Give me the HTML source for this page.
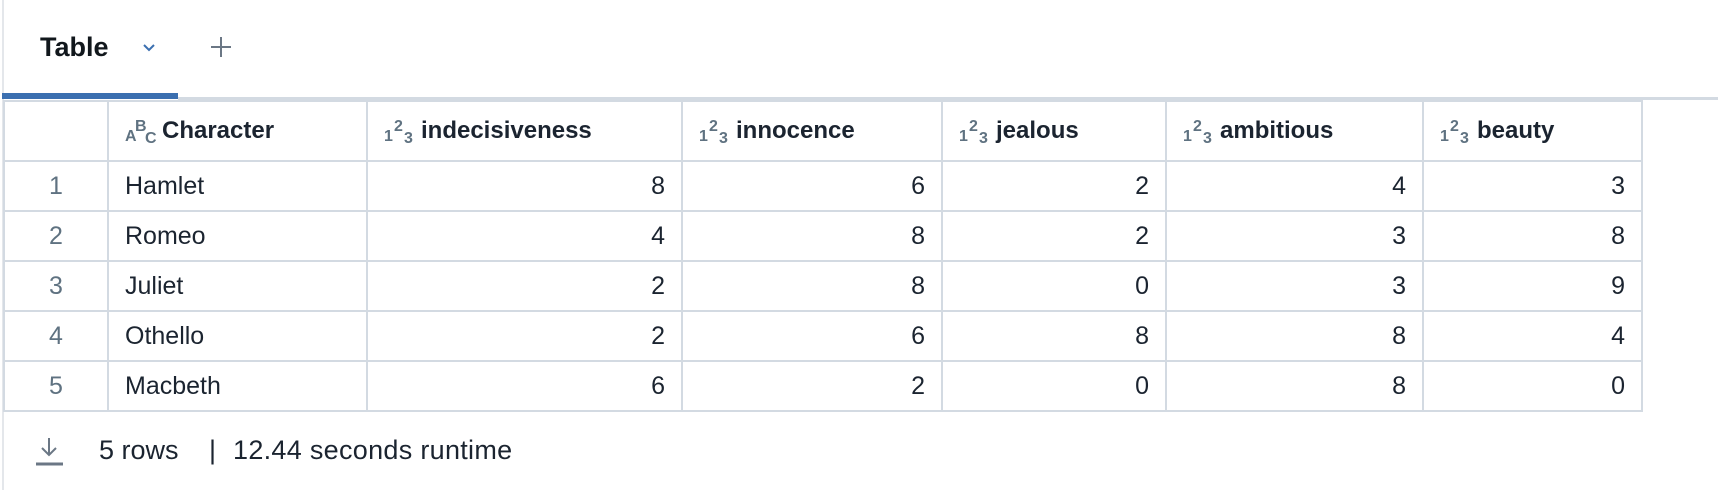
<!DOCTYPE html>
<html><head><style>
*{margin:0;padding:0;box-sizing:border-box}
body{width:1718px;height:490px;background:#fff;font-family:"Liberation Sans",sans-serif;color:#1b2430;position:relative;overflow:hidden}
.lb{position:absolute;left:2px;top:0;width:2px;height:490px;background:#e4e7eb}
.tab{position:absolute;left:40px;top:32px;font-size:27px;font-weight:bold;color:#11171c}
.chev{position:absolute;left:141px;top:42px}
.plus{position:absolute;left:210px;top:36px}
.ul{position:absolute;left:2px;top:93px;width:176px;height:6px;background:#3b6fb0}
.gl{position:absolute;left:178px;top:97px;width:1540px;height:3px;background:#d3dae2}
table{position:absolute;left:3px;top:100px;border-collapse:collapse;font-size:25px;table-layout:fixed}
td,th{border:2px solid #d3dae2;height:50px;padding:0 16px}
th{height:60px;text-align:left;font-weight:bold;white-space:nowrap;font-size:24px}
td{text-align:right}
td.n{text-align:center;color:#5f7281}
td.c{text-align:left}
.ic{color:#5f7281;font-size:16px;font-weight:bold;position:relative;display:inline-block;width:32px;height:24px;vertical-align:middle;margin-right:5px}
.ic span{position:absolute}
.foot{position:absolute;top:435px;font-size:27px;color:#1b2430;white-space:pre}
</style></head><body>
<div class="lb"></div>
<div class="tab">Table</div>
<svg class="chev" width="16" height="12" viewBox="0 0 16 12"><path d="M3 3l5 5 5-5" fill="none" stroke="#3b6fb0" stroke-width="2"/></svg>
<svg class="plus" width="22" height="22" viewBox="0 0 22 22"><path d="M11 1v20M1 11h20" stroke="#6b7785" stroke-width="2"/></svg>
<div class="ul"></div><div class="gl"></div>
<table>
<colgroup><col style="width:104px"><col style="width:259px"><col style="width:315px"><col style="width:260px"><col style="width:224px"><col style="width:257px"><col style="width:219px"></colgroup>
<tr><th></th>
<th><span class="ic"><span style="left:0;top:8px">A</span><span style="left:10px;top:-2px">B</span><span style="left:20px;top:10px">C</span></span>Character</th>
<th><span class="ic"><span style="left:0;top:8px">1</span><span style="left:10px;top:-2px">2</span><span style="left:20px;top:10px">3</span></span>indecisiveness</th>
<th><span class="ic"><span style="left:0;top:8px">1</span><span style="left:10px;top:-2px">2</span><span style="left:20px;top:10px">3</span></span>innocence</th>
<th><span class="ic"><span style="left:0;top:8px">1</span><span style="left:10px;top:-2px">2</span><span style="left:20px;top:10px">3</span></span>jealous</th>
<th><span class="ic"><span style="left:0;top:8px">1</span><span style="left:10px;top:-2px">2</span><span style="left:20px;top:10px">3</span></span>ambitious</th>
<th><span class="ic"><span style="left:0;top:8px">1</span><span style="left:10px;top:-2px">2</span><span style="left:20px;top:10px">3</span></span>beauty</th></tr>
<tr><td class="n">1</td><td class="c">Hamlet</td><td>8</td><td>6</td><td>2</td><td>4</td><td>3</td></tr>
<tr><td class="n">2</td><td class="c">Romeo</td><td>4</td><td>8</td><td>2</td><td>3</td><td>8</td></tr>
<tr><td class="n">3</td><td class="c">Juliet</td><td>2</td><td>8</td><td>0</td><td>3</td><td>9</td></tr>
<tr><td class="n">4</td><td class="c">Othello</td><td>2</td><td>6</td><td>8</td><td>8</td><td>4</td></tr>
<tr><td class="n">5</td><td class="c">Macbeth</td><td>6</td><td>2</td><td>0</td><td>8</td><td>0</td></tr>
</table>
<svg style="position:absolute;left:35px;top:436px" width="28" height="30" viewBox="0 0 28 30"><path d="M14 2v17M7 12l7 7 7-7" fill="none" stroke="#6b7785" stroke-width="2"/><path d="M1 28h27" stroke="#6b7785" stroke-width="3"/></svg>
<div class="foot" style="left:99px">5 rows</div>
<div class="foot" style="left:209px">|</div>
<div class="foot" style="left:233px;letter-spacing:0.3px">12.44 seconds runtime</div>
</body></html>
